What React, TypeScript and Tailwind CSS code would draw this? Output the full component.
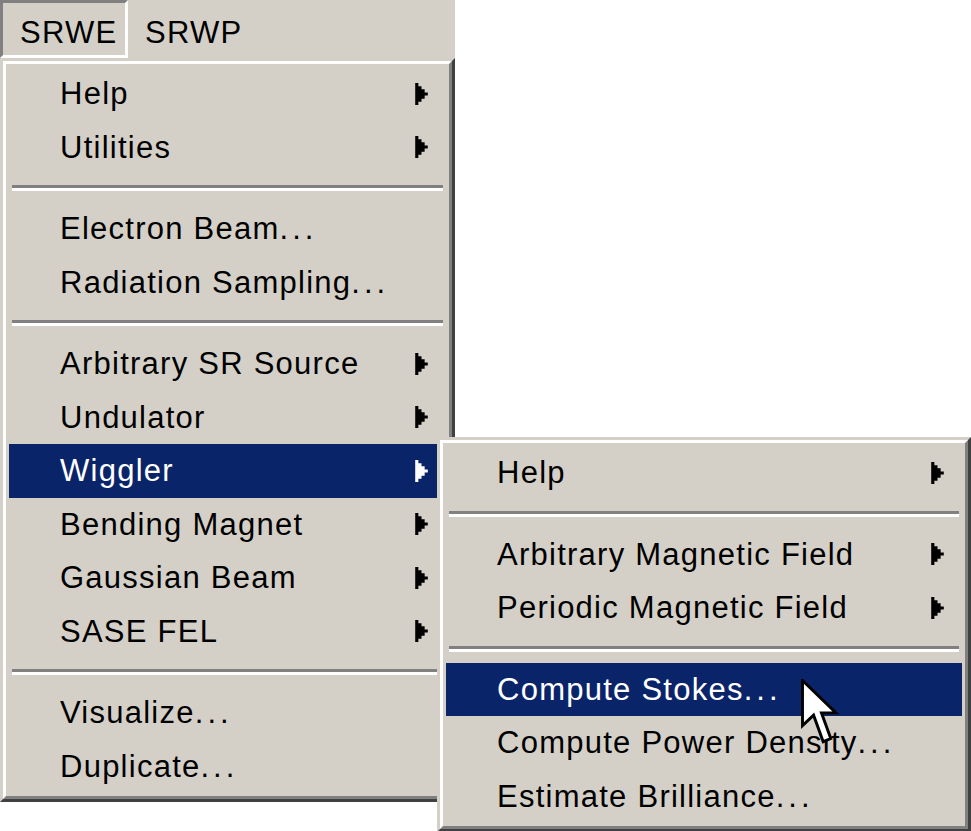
import React from "react";

type Item =
  | { type: "sep" }
  | { type: "item"; label: string; sub?: boolean; active?: boolean };

const mainItems: Item[] = [
  { type: "item", label: "Help", sub: true },
  { type: "item", label: "Utilities", sub: true },
  { type: "sep" },
  { type: "item", label: "Electron Beam..." },
  { type: "item", label: "Radiation Sampling..." },
  { type: "sep" },
  { type: "item", label: "Arbitrary SR Source", sub: true },
  { type: "item", label: "Undulator", sub: true },
  { type: "item", label: "Wiggler", sub: true, active: true },
  { type: "item", label: "Bending Magnet", sub: true },
  { type: "item", label: "Gaussian Beam", sub: true },
  { type: "item", label: "SASE FEL", sub: true },
  { type: "sep" },
  { type: "item", label: "Visualize..." },
  { type: "item", label: "Duplicate..." },
];

const subItems: Item[] = [
  { type: "item", label: "Help", sub: true },
  { type: "sep" },
  { type: "item", label: "Arbitrary Magnetic Field", sub: true },
  { type: "item", label: "Periodic Magnetic Field", sub: true },
  { type: "sep" },
  { type: "item", label: "Compute Stokes...", active: true },
  { type: "item", label: "Compute Power Density..." },
  { type: "item", label: "Estimate Brilliance..." },
];

const Arrow = ({ color }: { color: string }) => (
  <svg width="13" height="22" viewBox="0 0 12 21" className="shrink-0">
    <path
      d="M0 0H3V21H0Z M3 3H6V18H3Z M6 6H9V15H6Z M9 9H12V12H9Z"
      fill={color}
    />
  </svg>
);

// dots of the ellipsis sit a little further apart, as in the old menu font
const Label = ({ text }: { text: string }) => {
  if (!text.endsWith("...")) return <span className="whitespace-nowrap">{text}</span>;
  return (
    <span className="whitespace-nowrap">
      {text.slice(0, -3)}
      <span className="tracking-[4px]">...</span>
    </span>
  );
};

const Menu = ({ items }: { items: Item[] }) => (
  <div className="border-[3px] border-t-[#d4d0c8] border-l-[#d4d0c8] border-b-[#404040] border-r-[#404040] bg-[#d4d0c8]">
    <div className="border-[3px] border-t-white border-l-white border-b-[#808080] border-r-[#808080] p-[3px] flex flex-col">
      {items.map((it, i) =>
        it.type === "sep" ? (
          <div key={i} className="h-[28px] flex flex-col justify-center px-[3px]">
            <div className="h-[3px] bg-[#808080]" />
            <div className="h-[3px] bg-white" />
          </div>
        ) : (
          <div
            key={i}
            className={`h-[53.5px] flex items-center justify-between pl-[51px] pr-[18px] ${
              it.active ? "bg-[#0a246a] text-white" : "text-black"
            }`}
          >
            <Label text={it.label} />
            {it.sub && <Arrow color={it.active ? "#ffffff" : "#000000"} />}
          </div>
        )
      )}
    </div>
  </div>
);

export default function App() {
  return (
    <div
      className="relative w-[971px] h-[831px] bg-white overflow-hidden text-[31px] tracking-[1.25px] leading-none"
      style={{ fontFamily: '"Liberation Sans", Arial, sans-serif' }}
    >
      {/* menu bar */}
      <div className="w-[455px] h-[58px] bg-[#d4d0c8] flex items-stretch">
        <div className="w-[128px] border-[3px] border-t-[#808080] border-l-[#808080] border-b-white border-r-white flex items-center pl-[17px] pt-[6px]">
          SRWE
        </div>
        <div className="flex items-center pl-[17px] pt-[6px]">SRWP</div>
      </div>

      <div className="w-[455px] h-[745px]">
        <Menu items={mainItems} />
      </div>

      {/* Wiggler submenu */}
      <div className="absolute left-[437px] top-[437px] w-[534px]">
        <Menu items={subItems} />
      </div>

      {/* mouse pointer */}
      <svg
        className="absolute left-[801px] top-[679px]"
        width="38"
        height="70"
        viewBox="0 0 13 24"
      >
        <path
          d="M0.5 0.5 L0.5 16 L4.3 12.4 L7.6 21.5 L10.2 20.4 L7 11.6 L12 11.6 Z"
          fill="#ffffff"
          stroke="#000000"
          strokeWidth="1"
          strokeLinejoin="miter"
        />
      </svg>
    </div>
  );
}
